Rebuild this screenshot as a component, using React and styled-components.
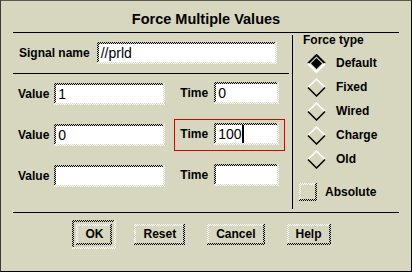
import React from "react";
import styled, { createGlobalStyle, css } from "styled-components";

const BG = "#d7d7c0";
const FONT = `"Liberation Sans", Helvetica, Arial, sans-serif`;

const GlobalStyle = createGlobalStyle`
  body {
    margin: 0;
    background: ${BG};
    font-family: ${FONT};
  }
`;

// 1px checker used for the Motif style stippled bevels
const checker = (c) => `repeating-conic-gradient(${c} 0 25%, ${BG} 0 50%)`;

const stipple = (topLeft, bottomRight, fill) => css`
  border: 2px solid transparent;
  background:
    ${checker(bottomRight)} left bottom / 2px 2px repeat-x border-box,
    ${checker(bottomRight)} right top / 2px 2px repeat-y border-box,
    linear-gradient(${fill}, ${fill}) padding-box,
    ${checker(topLeft)} 0 0 / 2px 2px border-box;
`;

const Dialog = styled.div`
  box-sizing: border-box;
  width: 412px;
  height: 272px;
  border: 1px solid #000;
  border-top-color: #5a5a50;
  border-left-color: #3a3a34;
  background: ${BG};
  display: flex;
  flex-direction: column;
  color: #000;
  font-family: ${FONT};
`;

const Title = styled.h1`
  margin: 0;
  padding-top: 5px;
  line-height: 26px;
  font-size: 14.5px;
  font-weight: bold;
  text-align: center;
`;

const Separator = styled.div`
  flex-shrink: 0;
  height: 1px;
  background: #000;
  margin: 0 ${(p) => p.$right ?? 12}px 0 ${(p) => p.$left ?? 12}px;
`;

const Body = styled.div`
  display: flex;
  height: 179px;
`;

const LeftPanel = styled.div`
  width: 279px;
  margin-left: 12px;
  display: flex;
  flex-direction: column;
`;

const SignalRow = styled.div`
  height: 40px;
  display: flex;
  align-items: center;
  gap: 7px;
  padding-left: 6px;
`;

const Label = styled.span`
  font-size: 12px;
  font-weight: bold;
  white-space: nowrap;
`;

const Field = styled.div`
  box-sizing: border-box;
  width: ${(p) => p.$width}px;
  height: 22px;
  padding: 0 2px;
  display: flex;
  align-items: center;
  font-size: 14px;
  line-height: 18px;
  ${stipple("#000", "#fff", "#fff")}
`;

const Caret = styled.span`
  display: inline-block;
  width: 2px;
  height: 18px;
  background: #000;
`;

const ValueList = styled.div`
  padding-top: 4px;
  display: flex;
  flex-direction: column;
  gap: 9px;
`;

const ValueRow = styled.div`
  height: 32px;
  display: flex;
  align-items: center;
  gap: 5px;
  padding-left: 5px;
`;

const FocusBox = styled.div`
  display: flex;
  align-items: center;
  gap: 6px;
  margin-left: 4px;
  padding: 3px 5px 5px;
  border: 1px solid ${(p) => (p.$focused ? "#d80000" : "transparent")};
`;

const VRule = styled.div`
  width: 1px;
  background: #000;
  margin: 2px 0 3px;
`;

const RightPanel = styled.div`
  width: 105px;
  margin-right: 12px;
  display: flex;
  flex-direction: column;
`;

const Heading = styled.div`
  font-size: 12px;
  font-weight: bold;
  line-height: 14px;
  padding-left: 10px;
`;

const RadioList = styled.div`
  margin-top: 4px;
  display: flex;
  flex-direction: column;
`;

const RadioRow = styled.div`
  height: 24px;
  display: flex;
  align-items: center;
  gap: 10px;
  padding-left: 14px;
`;

const CheckRow = styled.div`
  margin-top: 12px;
  display: flex;
  align-items: center;
  gap: 8px;
  padding-left: 6px;
`;

const CheckBox = styled.span`
  box-sizing: border-box;
  width: 18px;
  height: 18px;
  ${stipple("#fff", "#000", BG)}
`;

const Footer = styled.div`
  display: flex;
  justify-content: center;
  align-items: flex-start;
  gap: 22px;
  padding-top: 11px;
  padding-right: 5px;
`;

const DefaultRing = styled.div`
  display: flex;
  padding: 2px;
  margin: -4px;
  ${stipple("#000", "#fff", BG)}
`;

const Button = styled.button`
  box-sizing: border-box;
  height: 21px;
  padding: 0 7px;
  font-family: ${FONT};
  font-size: 12px;
  font-weight: bold;
  line-height: 17px;
  color: #000;
  ${stipple("#fff", "#000", BG)}
`;

function Diamond({ selected }) {
  return (
    <svg width="19" height="19" viewBox="0 0 19 19">
      <polyline
        points="1,9.5 9.5,1 18,9.5"
        fill="none"
        stroke={selected ? "#000" : "#fff"}
        strokeWidth={selected ? 2 : 1.5}
      />
      <polyline
        points="1,9.5 9.5,18 18,9.5"
        fill="none"
        stroke={selected ? "#fff" : "#000"}
        strokeWidth={selected ? 2 : 1.5}
      />
      {selected && <polygon points="9.5,4 15,9.5 9.5,15 4,9.5" fill="#000" />}
    </svg>
  );
}

const rows = [
  { value: "1", time: "0" },
  { value: "0", time: "100", focused: true },
  { value: "", time: "" },
];

const forceTypes = ["Default", "Fixed", "Wired", "Charge", "Old"];

export default function App() {
  return (
    <>
      <GlobalStyle />
      <Dialog>
        <Title>Force Multiple Values</Title>
        <Separator />
        <Body>
          <LeftPanel>
            <SignalRow>
              <Label>Signal name</Label>
              <Field $width={180}>//prld</Field>
            </SignalRow>
            <Separator $left={0} $right={3} />
            <ValueList>
              {rows.map((r, i) => (
                <ValueRow key={i}>
                  <Label>Value</Label>
                  <Field $width={111}>{r.value}</Field>
                  <FocusBox $focused={r.focused}>
                    <Label>Time</Label>
                    <Field $width={65}>
                      {r.time}
                      {r.focused && <Caret />}
                    </Field>
                  </FocusBox>
                </ValueRow>
              ))}
            </ValueList>
          </LeftPanel>
          <VRule />
          <RightPanel>
            <Heading>Force type</Heading>
            <RadioList>
              {forceTypes.map((t, i) => (
                <RadioRow key={t}>
                  <Diamond selected={i === 0} />
                  <Label>{t}</Label>
                </RadioRow>
              ))}
            </RadioList>
            <CheckRow>
              <CheckBox />
              <Label>Absolute</Label>
            </CheckRow>
          </RightPanel>
        </Body>
        <Separator />
        <Footer>
          <DefaultRing>
            <Button>OK</Button>
          </DefaultRing>
          <Button>Reset</Button>
          <Button>Cancel</Button>
          <Button>Help</Button>
        </Footer>
      </Dialog>
    </>
  );
}
